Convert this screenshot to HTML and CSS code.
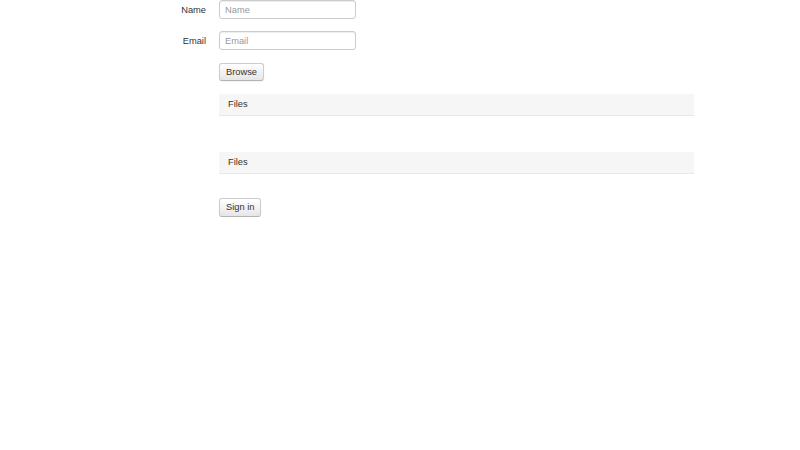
FILE: index.html
```html
<!DOCTYPE html>
<html>
<head>
<meta charset="utf-8">
<link rel="stylesheet" href="styles.css">
</head>
<body>
<form class="form">
  <div class="row">
    <label class="label">Name</label>
    <div class="controls"><input class="input" type="text" placeholder="Name"></div>
  </div>
  <div class="row row-email">
    <label class="label">Email</label>
    <div class="controls"><input class="input" type="text" placeholder="Email"></div>
  </div>
  <div class="row row-browse">
    <div class="label"></div>
    <div class="controls">
      <button type="button" class="btn">Browse</button>
      <div class="panel">Files</div>
      <div class="panel panel-second">Files</div>
      <button type="button" class="btn btn-sign">Sign in</button>
    </div>
  </div>
</form>
</body>
</html>
```
FILE: styles.css
```css
html, body {
  margin: 0;
  padding: 0;
  background: #fff;
}
body {
  font-family: "Liberation Sans", Arial, sans-serif;
  font-size: 9.3px;
  color: #333;
}
.row {
  display: flex;
  align-items: center;
}
.row-email {
  margin-top: 12px;
}
.row-browse {
  margin-top: 13px;
  align-items: flex-start;
}
.label {
  width: 219px;
  flex: 0 0 219px;
  text-align: right;
  padding-right: 13px;
  box-sizing: border-box;
  color: #333;
}
.controls {
  flex: 0 0 auto;
}
.input {
  display: block;
  box-sizing: border-box;
  width: 137px;
  height: 19px;
  margin: 0;
  padding: 0 5px;
  border: 1px solid #ccc;
  border-radius: 3px;
  box-shadow: inset 0 1px 1px rgba(0,0,0,0.075);
  font-family: "Liberation Sans", Arial, sans-serif;
  font-size: 9.3px;
  color: #555;
  outline: none;
}
.input::placeholder {
  color: #999;
}
.btn {
  display: block;
  box-sizing: border-box;
  height: 18px;
  margin: 0;
  padding: 0 6px;
  border: 1px solid #ccc;
  border-bottom-color: #b3b3b3;
  border-radius: 3px;
  background: linear-gradient(#ffffff, #e6e6e6);
  box-shadow: inset 0 1px 0 rgba(255,255,255,0.2), 0 1px 2px rgba(0,0,0,0.05);
  font-family: "Liberation Sans", Arial, sans-serif;
  font-size: 9.3px;
  line-height: 16px;
  color: #333;
}
.panel {
  box-sizing: border-box;
  width: 475px;
  height: 22px;
  margin-top: 13px;
  padding: 0 9px;
  background: #f6f6f6;
  border-bottom: 1px solid #e8e8e8;
  line-height: 21px;
  color: #333;
}
.panel-second {
  margin-top: 36px;
}
.btn-sign {
  margin-top: 24px;
  height: 19px;
  line-height: 17px;
}
```
